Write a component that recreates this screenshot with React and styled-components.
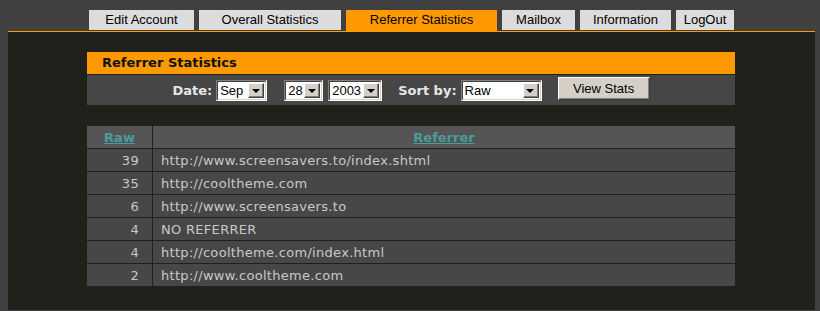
import React from "react";
import styled, { createGlobalStyle } from "styled-components";

const Global = createGlobalStyle`
  html, body { margin: 0; padding: 0; background: #404040; }
  body { font-family: "DejaVu Sans", Verdana, sans-serif; }
`;

const Page = styled.div`
  padding: 10px 5px 0 8px;
`;

const Nav = styled.nav`
  display: flex;
  justify-content: center;
  gap: 5px;
  height: 21px;
  align-items: flex-start;
`;

const Tab = styled.a`
  display: block;
  box-sizing: border-box;
  width: ${(p) => p.$w}px;
  height: ${(p) => (p.$active ? 21 : 20)}px;
  line-height: 20px;
  text-align: center;
  font-family: "Liberation Sans", Arial, sans-serif;
  font-size: 13px;
  color: #000;
  text-decoration: none;
  background: ${(p) => (p.$active ? "#ff9900" : "#dcdcdc")};
`;

const Panel = styled.main`
  border-top: 1px solid #ff9900;
  background: #21211b;
  min-height: 279px;
  padding: 20px 1px 0 0;
  box-sizing: border-box;
`;

const Content = styled.div`
  width: 648px;
  margin: 0 auto;
`;

const TitleBar = styled.h2`
  margin: 0;
  height: 22px;
  line-height: 22px;
  padding-left: 15px;
  background: #ff9900;
  color: #111;
  font-size: 13px;
  font-weight: bold;
`;

const FormRow = styled.form`
  margin-top: 1px;
  height: 30px;
  background: #464646;
  display: flex;
  align-items: center;
  justify-content: center;
`;

const Label = styled.label`
  color: #e6e6e6;
  font-size: 13px;
  font-weight: bold;
  margin-left: ${(p) => p.$ml || 0}px;
  margin-right: 4px;
`;

const SelectWrap = styled.span`
  position: relative;
  display: inline-block;
  width: ${(p) => p.$w}px;
  height: 21px;
  margin-left: ${(p) => p.$ml || 0}px;
  box-sizing: border-box;
  border: 1px solid;
  border-color: #808080 #ffffff #ffffff #808080;
  background: #fff;
`;

const Select = styled.select`
  appearance: none;
  -webkit-appearance: none;
  display: block;
  width: 100%;
  height: 100%;
  box-sizing: border-box;
  border: 1px solid;
  border-color: #404040 #d4d0c8 #d4d0c8 #404040;
  background: #fff;
  font-family: "Liberation Sans", Arial, sans-serif;
  font-size: 13px;
  color: #000;
  padding: 0 0 0 2px;
  margin: 0;
  outline: none;
  border-radius: 0;
`;

const Arrow = styled.span`
  position: absolute;
  top: 2px;
  right: 2px;
  bottom: 2px;
  width: 16px;
  box-sizing: border-box;
  background: #d4d0c8;
  border: 1px solid;
  border-color: #ffffff #404040 #404040 #ffffff;
  box-shadow: inset -1px -1px 0 #808080;
  pointer-events: none;
  display: flex;
  align-items: center;
  justify-content: center;
  &::after {
    content: "";
    border-left: 4px solid transparent;
    border-right: 4px solid transparent;
    border-top: 4px solid #000;
    margin-top: 1px;
    margin-left: -1px;
  }
`;

const Button = styled.button`
  width: 92px;
  height: 23px;
  margin-left: 16px;
  margin-top: -3px;
  box-sizing: border-box;
  background: #d4d0c8;
  border: 1px solid;
  border-color: #ffffff #404040 #404040 #ffffff;
  box-shadow: inset -1px -1px 0 #808080;
  font-family: "Liberation Sans", Arial, sans-serif;
  font-size: 13px;
  color: #000;
  padding: 0;
  border-radius: 0;
`;

const Table = styled.table`
  margin: 20px -1px 0;
  width: 650px;
  border-collapse: separate;
  border-spacing: 1px;
  font-size: 13px;
`;

const Th = styled.th`
  height: 22px;
  padding: 0;
  background: #555555;
  text-align: center;
  width: ${(p) => (p.$w ? p.$w + "px" : "auto")};
`;

const SortLink = styled.a`
  color: #4a9c9c;
  font-weight: bold;
  text-decoration: underline;
  font-size: 13px;
`;

const Td = styled.td`
  height: 22px;
  padding: 0 ${(p) => (p.$num ? "13px" : "8px")} 0 8px;
  background: #474747;
  color: #c8c8c8;
  text-align: ${(p) => (p.$num ? "right" : "left")};
  letter-spacing: 0.3px;
`;

const tabs = [
  { label: "Edit Account", w: 105 },
  { label: "Overall Statistics", w: 142 },
  { label: "Referrer Statistics", w: 151, active: true },
  { label: "Mailbox", w: 73 },
  { label: "Information", w: 91 },
  { label: "LogOut", w: 58 },
];

const rows = [
  [39, "http://www.screensavers.to/index.shtml"],
  [35, "http://cooltheme.com"],
  [6, "http://www.screensavers.to"],
  [4, "NO REFERRER"],
  [4, "http://cooltheme.com/index.html"],
  [2, "http://www.cooltheme.com"],
];

function Dropdown({ w, ml, value, options }) {
  return (
    <SelectWrap $w={w} $ml={ml}>
      <Select defaultValue={value}>
        {options.map((o) => (
          <option key={o}>{o}</option>
        ))}
      </Select>
      <Arrow />
    </SelectWrap>
  );
}

export default function App() {
  return (
    <>
      <Global />
      <Page>
        <Nav>
          {tabs.map((t) => (
            <Tab key={t.label} href="#" $w={t.w} $active={t.active}>
              {t.label}
            </Tab>
          ))}
        </Nav>
        <Panel>
          <Content>
            <TitleBar>Referrer Statistics</TitleBar>
            <FormRow onSubmit={(e) => e.preventDefault()}>
              <Label>Date:</Label>
              <Dropdown w={51} value="Sep" options={["Aug", "Sep", "Oct"]} />
              <Dropdown w={39} ml={17} value="28" options={["27", "28", "29"]} />
              <Dropdown w={54} ml={5} value="2003" options={["2002", "2003"]} />
              <Label $ml={16}>Sort by:</Label>
              <Dropdown w={81} value="Raw" options={["Raw", "Referrer"]} />
              <Button type="submit">View Stats</Button>
            </FormRow>
            <Table>
              <thead>
                <tr>
                  <Th $w={65}>
                    <SortLink href="#">Raw</SortLink>
                  </Th>
                  <Th>
                    <SortLink href="#">Referrer</SortLink>
                  </Th>
                </tr>
              </thead>
              <tbody>
                {rows.map(([n, url], i) => (
                  <tr key={i}>
                    <Td $num>{n}</Td>
                    <Td>{url}</Td>
                  </tr>
                ))}
              </tbody>
            </Table>
          </Content>
        </Panel>
      </Page>
    </>
  );
}
